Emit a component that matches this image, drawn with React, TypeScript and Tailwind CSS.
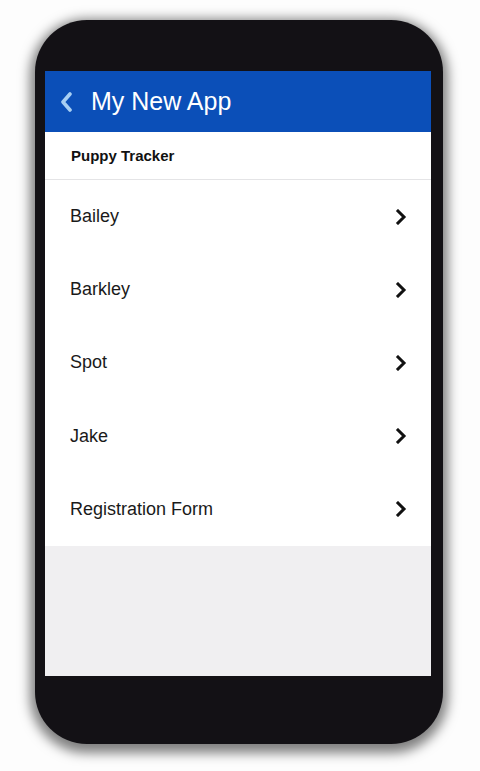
const puppies = ["Bailey", "Barkley", "Spot", "Jake", "Registration Form"];

function Chevron() {
  return (
    <svg width="12" height="16" viewBox="0 0 12 16" className="shrink-0">
      <polyline points="3,2 9,8 3,14" fill="none" stroke="#111" strokeWidth="3" strokeLinecap="square" strokeLinejoin="miter" />
    </svg>
  );
}

function BackChevron() {
  return (
    <svg width="16" height="20" viewBox="0 0 16 20" className="shrink-0">
      <polyline points="11,2 4,10 11,18" fill="none" stroke="#a8cff3" strokeWidth="3.6" strokeLinecap="round" strokeLinejoin="round" />
    </svg>
  );
}

export default function App() {
  return (
    <div className="w-[480px] h-[771px] bg-[#fdfdfd] pt-[20px] pl-[35px] font-['Liberation_Sans',Arial,sans-serif]">
      <div className="w-[408px] h-[724px] rounded-[52px] bg-[#131115] pt-[51px] pb-[68px] pl-[10px] pr-[12px] flex flex-col shadow-[0_4px_12px_5px_rgba(0,0,0,0.5)]">
        <div className="flex-1 flex flex-col bg-[#f0eff1]">
          <header className="h-[61px] bg-[#0b4fb8] flex items-center pl-[14px] gap-[16px]">
            <BackChevron />
            <h1 className="text-white text-[25px] leading-none">My New App</h1>
          </header>
          <div className="h-[48px] bg-white flex items-center pl-[26px] pt-[1px] border-b border-[#e4e4e6]">
            <span className="text-[15px] font-bold text-[#111]">Puppy Tracker</span>
          </div>
          <ul className="bg-white">
            {puppies.map((p) => (
              <li key={p} className="h-[73.2px] flex items-center justify-between pl-[25px] pr-[24px]">
                <span className="text-[18px] text-[#1a1a1a]">{p}</span>
                <Chevron />
              </li>
            ))}
          </ul>
        </div>
      </div>
    </div>
  );
}
